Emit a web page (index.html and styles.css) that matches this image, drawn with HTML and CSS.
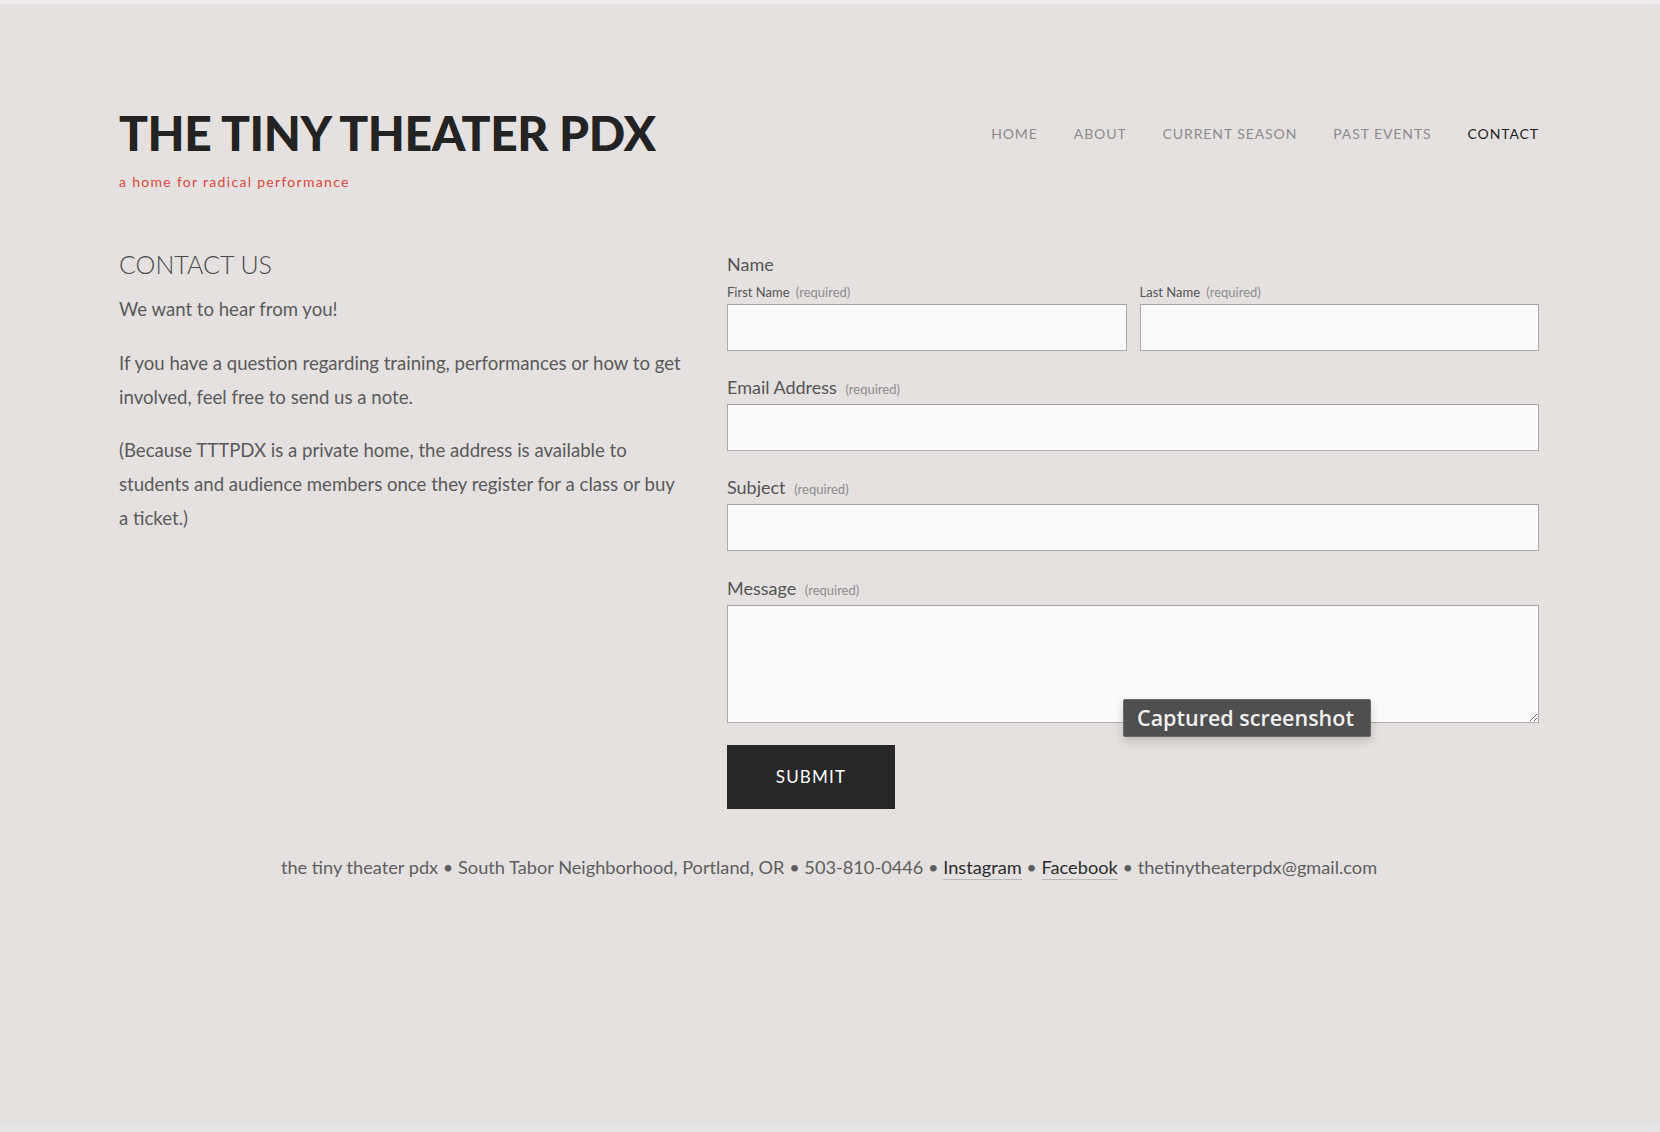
FILE: index.html
```html
<!DOCTYPE html>
<html lang="en">
<head>
<meta charset="utf-8">
<title>Contact — The Tiny Theater PDX</title>
<link rel="stylesheet" href="styles.css">
</head>
<body>
<div class="site">
  <header class="header">
    <div class="brand">
      <h1 class="title">THE TINY THEATER PDX</h1>
      <p class="tagline">a home for radical performance</p>
    </div>
    <nav class="nav">
      <a class="nav-link" href="#">Home</a>
      <a class="nav-link" href="#">About</a>
      <a class="nav-link" href="#">Current Season</a>
      <a class="nav-link" href="#">Past Events</a>
      <a class="nav-link active" href="#">Contact</a>
    </nav>
  </header>

  <main class="main">
    <section class="intro">
      <h2 class="intro-title">CONTACT US</h2>
      <p class="intro-text">We want to hear from you!</p>
      <p class="intro-text">If you have a question regarding training, performances or how to get involved, feel free to send us a note.</p>
      <p class="intro-text">(Because TTTPDX is a private home, the address is available to students and audience members once they register for a class or buy a ticket.)</p>
    </section>

    <form class="form">
      <div class="field field-name">
        <div class="label">Name</div>
        <div class="name-row">
          <div class="name-col">
            <div class="sublabel">First Name <span class="req">(required)</span></div>
            <input class="input" type="text">
          </div>
          <div class="name-col">
            <div class="sublabel">Last Name <span class="req">(required)</span></div>
            <input class="input" type="text">
          </div>
        </div>
      </div>
      <div class="field">
        <div class="label">Email Address <span class="req">(required)</span></div>
        <input class="input" type="email">
      </div>
      <div class="field">
        <div class="label">Subject <span class="req">(required)</span></div>
        <input class="input" type="text">
      </div>
      <div class="field field-last">
        <div class="label">Message <span class="req">(required)</span></div>
        <textarea class="input textarea"></textarea>
      </div>
      <button class="submit" type="button">SUBMIT</button>
    </form>
  </main>

  <footer class="footer">
    the tiny theater pdx • South Tabor Neighborhood, Portland, OR • 503-810-0446 • <a class="footer-link" href="#">Instagram</a> • <a class="footer-link" href="#">Facebook</a> • thetinytheaterpdx@gmail.com
  </footer>

  <div class="tooltip">Captured screenshot</div>
</div>
</body>
</html>
```

FILE: styles.css
```css
html {
  background: #e5e5e5;
}

body {
  margin: 0;
  font-family: Lato, "Open Sans", sans-serif;
  color: #555555;
}

.site {
  position: relative;
  box-sizing: border-box;
  height: 1122px;
  background: #e4e1e0;
  border-top: 4px solid #ebebeb;
  padding: 0 121px 0 119px;
}

/* Header */
.header {
  display: flex;
  justify-content: space-between;
  align-items: flex-start;
  padding-top: 105px;
}

.title {
  margin: 0;
  font-family: Lato, sans-serif;
  font-weight: 900;
  font-size: 48px;
  line-height: 1;
  letter-spacing: -0.4px;
  color: #232323;
}

.tagline {
  margin: 16px 0 0;
  font-size: 14px;
  line-height: 17px;
  letter-spacing: 1.3px;
  color: #d9483a;
}

.nav {
  display: flex;
  gap: 36px;
  margin-top: 16px;
}

.nav-link {
  font-size: 14px;
  line-height: 18px;
  letter-spacing: 0.9px;
  text-transform: uppercase;
  text-decoration: none;
  color: #8c8c8c;
}

.nav-link.active {
  color: #1f1f1f;
}

/* Main */
.main {
  display: grid;
  grid-template-columns: 1fr 812px;
  column-gap: 40px;
  margin-top: 59px;
}

.intro-title {
  margin: 0 0 12px;
  font-weight: 300;
  font-size: 25px;
  line-height: 31px;
  letter-spacing: 0;
  color: #4a4a4a;
}

.intro-text {
  margin: 0 0 19.5px;
  font-size: 18.6px;
  line-height: 34px;
  color: #5a5a5a;
}

/* Form */
.form {
  padding-top: 3px;
}

.field {
  margin-bottom: 24.6px;
}

.field-name {
  margin-bottom: 23.6px;
}

.field-last {
  margin-bottom: 22px;
}

.label {
  font-size: 18px;
  line-height: 24px;
  color: #555555;
  margin-bottom: 5px;
}

.req {
  font-size: 13px;
  line-height: 1;
  color: #8e8e8e;
  margin-left: 4px;
}

.name-row {
  display: grid;
  grid-template-columns: 1fr 1fr;
  column-gap: 13px;
  margin-top: 6.5px;
}

.sublabel {
  font-size: 13px;
  line-height: 18px;
  color: #555555;
  margin-bottom: 3.5px;
}

.sublabel .req {
  margin-left: 3px;
}

.input {
  display: block;
  box-sizing: border-box;
  width: 100%;
  height: 47px;
  margin: 0;
  background: #fafafa;
  border: 1px solid #ababab;
  border-top-color: #a2a2a2;
  border-radius: 0;
  font-family: inherit;
  font-size: 16px;
  padding: 12px;
}

.textarea {
  height: 118px;
  resize: vertical;
}

.submit {
  display: block;
  width: 168px;
  height: 64px;
  border: 0;
  background: #272727;
  color: #ffffff;
  font-family: Lato, sans-serif;
  font-size: 17px;
  font-weight: 400;
  letter-spacing: 1.2px;
  cursor: pointer;
}

/* Footer */
.footer {
  margin-top: 46px;
  text-align: center;
  font-size: 18.2px;
  line-height: 24px;
  color: #5e5e5e;
}

.footer-link {
  color: #2c2c2c;
  text-decoration: none;
  border-bottom: 1px solid #b8b8b8;
  padding-bottom: 1px;
}

/* Overlay tooltip */
.tooltip {
  position: absolute;
  left: 1123px;
  top: 695px;
  box-sizing: border-box;
  width: 248px;
  height: 38px;
  padding: 0 13px;
  background: #4f4f4f;
  border: 1px solid #6a6a6a;
  border-radius: 2px;
  color: #f0f0f0;
  font-family: "Open Sans", sans-serif;
  font-size: 21.5px;
  font-weight: 600;
  line-height: 36px;
  white-space: nowrap;
  box-shadow: 0 4px 10px rgba(0, 0, 0, 0.18);
}
```
